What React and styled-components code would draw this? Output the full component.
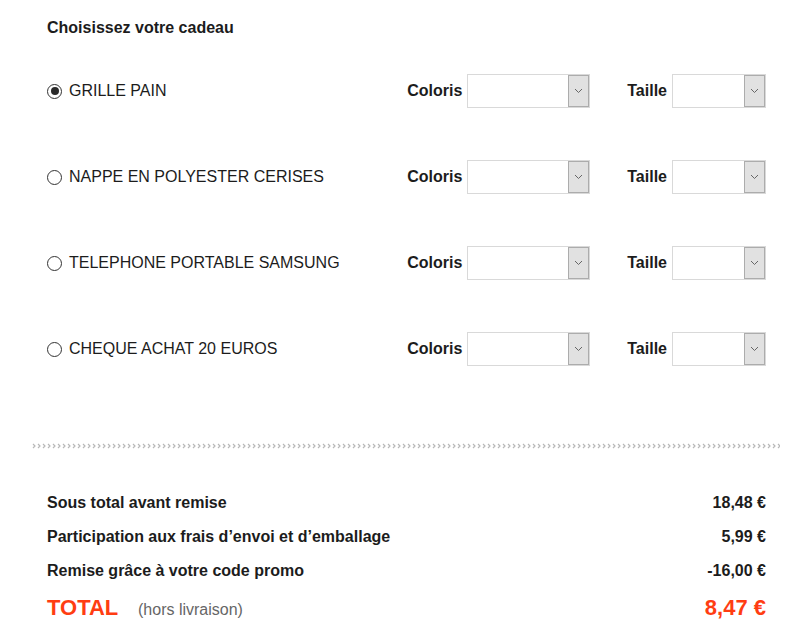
import React from "react";
import styled, { createGlobalStyle } from "styled-components";

const GlobalStyle = createGlobalStyle`
  body {
    margin: 0;
    background: #fff;
    font-family: "Liberation Sans", Arial, sans-serif;
    color: #1c1c1c;
  }
`;

const gifts = [
  { id: "grille", label: "GRILLE PAIN", checked: true },
  { id: "nappe", label: "NAPPE EN POLYESTER CERISES" },
  { id: "tel", label: "TELEPHONE PORTABLE SAMSUNG" },
  { id: "cheque", label: "CHEQUE ACHAT 20 EUROS" },
];

const lines = [
  { label: "Sous total avant remise", value: "18,48 €" },
  { label: "Participation aux frais d’envoi et d’emballage", value: "5,99 €" },
  { label: "Remise grâce à votre code promo", value: "-16,00 €" },
];

const Chevron = () => (
  <svg width="9" height="6" viewBox="0 0 9 6">
    <path d="M1 1 L4.5 4.5 L8 1" fill="none" stroke="#666" strokeWidth="1" />
  </svg>
);

const Select = ({ width }) => (
  <SelectBox $width={width}>
    <SelectValue />
    <SelectButton>
      <Chevron />
    </SelectButton>
  </SelectBox>
);

const App = () => {
  return (
    <Page>
      <GlobalStyle />
      <Inner>
        <Title>Choisissez votre cadeau</Title>
        <GiftList>
          {gifts.map((g) => (
            <GiftRow key={g.id}>
              <Choice>
                <Radio $checked={g.checked} />
                <ChoiceLabel>{g.label}</ChoiceLabel>
              </Choice>
              <Fields>
                <Field>
                  <FieldLabel>Coloris</FieldLabel>
                  <Select width={123} />
                </Field>
                <Field>
                  <FieldLabel>Taille</FieldLabel>
                  <Select width={94} />
                </Field>
              </Fields>
            </GiftRow>
          ))}
        </GiftList>
      </Inner>
      <Separator>
        <svg width="100%" height="6">
          <defs>
            <pattern id="chev" width="5" height="6" patternUnits="userSpaceOnUse">
              <path d="M1 1 L3 3 L1 5" fill="none" stroke="#b8b8b8" strokeWidth="1.2" />
            </pattern>
          </defs>
          <rect width="100%" height="6" fill="url(#chev)" />
        </svg>
      </Separator>
      <Inner>
        <Summary>
          {lines.map((l) => (
            <SummaryRow key={l.label}>
              <span>{l.label}</span>
              <span>{l.value}</span>
            </SummaryRow>
          ))}
          <TotalRow>
            <TotalLabel>
              TOTAL <Note>(hors livraison)</Note>
            </TotalLabel>
            <TotalValue>8,47 €</TotalValue>
          </TotalRow>
        </Summary>
      </Inner>
    </Page>
  );
};

export default App;

const Page = styled.div`
  width: 748px;
  padding: 18px 20px 0 32px;
`;

const Inner = styled.div`
  padding: 0 14px 0 15px;
`;

const Title = styled.h2`
  margin: 0;
  font-size: 16px;
  line-height: 20px;
  font-weight: bold;
  color: #1c1c1c;
`;

const GiftList = styled.div`
  margin-top: 10px;
  display: flex;
  flex-direction: column;
`;

const GiftRow = styled.div`
  height: 86px;
  display: flex;
  align-items: center;
  justify-content: space-between;
`;

const Choice = styled.label`
  display: flex;
  align-items: center;
  gap: 7px;
`;

const Radio = styled.span`
  position: relative;
  width: 13px;
  height: 13px;
  border: 1px solid #333;
  border-radius: 50%;
  box-sizing: content-box;
  &::after {
    content: "";
    display: ${(p) => (p.$checked ? "block" : "none")};
    position: absolute;
    left: 2.5px;
    top: 2.5px;
    width: 8px;
    height: 8px;
    border-radius: 50%;
    background: #2a2a2a;
  }
`;

const ChoiceLabel = styled.span`
  font-size: 16px;
  color: #1c1c1c;
`;

const Fields = styled.div`
  display: flex;
  align-items: center;
  gap: 37px;
`;

const Field = styled.div`
  display: flex;
  align-items: center;
  gap: 5px;
`;

const FieldLabel = styled.span`
  font-size: 16px;
  font-weight: bold;
`;

const SelectBox = styled.div`
  width: ${(p) => p.$width}px;
  height: 34px;
  box-sizing: border-box;
  border: 1px solid #d9d9d9;
  display: flex;
  background: #fff;
`;

const SelectValue = styled.div`
  flex: 1;
`;

const SelectButton = styled.div`
  width: 21px;
  box-sizing: border-box;
  background: #e1e1e1;
  border: 1px solid #acacac;
  display: flex;
  align-items: center;
  justify-content: center;
`;

const Separator = styled.div`
  margin-top: 51px;
  height: 6px;
  display: flex;
`;

const Summary = styled.div`
  margin-top: 37px;
  display: flex;
  flex-direction: column;
`;

const SummaryRow = styled.div`
  height: 34px;
  display: flex;
  align-items: center;
  justify-content: space-between;
  font-size: 16px;
  font-weight: bold;
  color: #1c1c1c;
`;

const TotalRow = styled.div`
  height: 40px;
  display: flex;
  align-items: center;
  justify-content: space-between;
`;

const TotalLabel = styled.span`
  font-size: 22px;
  font-weight: bold;
  color: #ff3d12;
`;

const Note = styled.span`
  margin-left: 14px;
  font-size: 16px;
  font-weight: normal;
  color: #666;
`;

const TotalValue = styled.span`
  font-size: 22px;
  font-weight: bold;
  color: #ff3d12;
`;
